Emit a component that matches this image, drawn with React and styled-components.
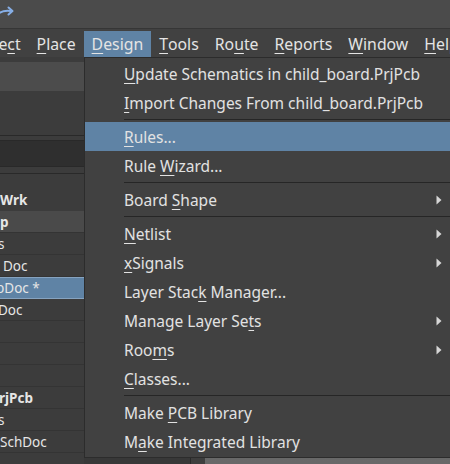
import React from "react";
import styled, { createGlobalStyle } from "styled-components";

const GlobalStyle = createGlobalStyle`
  html, body {
    margin: 0;
    padding: 0;
    background: #3c3c3c;
  }
  body {
    font-family: "Noto Sans", "Open Sans", sans-serif;
  }
`;

const menuBarItems = [
  { label: "Project", key: 5, shift: -39 },
  { label: "Place", key: 0 },
  { label: "Design", key: 0, active: true },
  { label: "Tools", key: 0 },
  { label: "Route", key: 2 },
  { label: "Reports", key: 0 },
  { label: "Window", key: 0 },
  { label: "Help", key: 0 },
];

const menuItems = [
  { label: "Update Schematics in child_board.PrjPcb", key: 0 },
  { label: "Import Changes From child_board.PrjPcb", key: 0 },
  { sep: true },
  { label: "Rules...", key: 0, hover: true },
  { label: "Rule Wizard...", key: 5 },
  { sep: true },
  { label: "Board Shape", key: 6, sub: true },
  { sep: true },
  { label: "Netlist", key: 0, sub: true },
  { label: "xSignals", key: 0, sub: true },
  { label: "Layer Stack Manager...", key: 10 },
  { label: "Manage Layer Sets", key: 15, sub: true },
  { label: "Rooms", key: 3, sub: true },
  { label: "Classes...", key: 0 },
  { sep: true },
  { label: "Make PCB Library", key: 5 },
  { label: "Make Integrated Library", key: 1 },
];

const treeRows = [
  { text: "Wrk", bold: true, line: false },
  { text: "p", bold: true, state: "focus" },
  { text: "s", shift: -2 },
  { text: "Doc", shift: 3 },
  { text: "bDoc *", shift: -4, state: "selected" },
  { text: "Doc", shift: -2 },
  { text: "" },
  { text: "" },
  { text: "" },
  { text: "rjPcb", bold: true, shift: -1 },
  { text: "s", shift: -2 },
  { text: "SchDoc", shift: 0 },
  { text: "" },
];

const Hotkey = ({ label, index }) => (
  <>
    {label.slice(0, index)}
    <Key>{label[index]}</Key>
    {label.slice(index + 1)}
  </>
);

const RedoIcon = () => (
  <svg width="16" height="12" viewBox="0 0 16 12">
    <path
      d="M-4 11 C-1 5.5, 4 4, 11 5"
      fill="none"
      stroke="#86aee6"
      strokeWidth="2"
      strokeLinecap="round"
    />
    <path
      d="M8.5 1.5 L12.5 5 L8.5 8.5"
      fill="none"
      stroke="#86aee6"
      strokeWidth="2"
      strokeLinecap="round"
      strokeLinejoin="round"
    />
  </svg>
);

const SubArrow = () => (
  <svg width="6" height="10" viewBox="0 0 6 10">
    <path d="M0.5 0.5 L5.5 5 L0.5 9.5 Z" fill="#d6d6d6" />
  </svg>
);

const App = () => {
  return (
    <Screen>
      <GlobalStyle />
      <TopBar>
        <RedoIcon />
      </TopBar>
      <MenuBar>
        {menuBarItems.map((m) => (
          <MenuBarItem key={m.label} $active={m.active} $shift={m.shift}>
            <Hotkey label={m.label} index={m.key} />
          </MenuBarItem>
        ))}
      </MenuBar>
      <Body>
        <LeftPanel>
          <PanelGap $h={5} />
          <SearchBox />
          <PanelGap $h={44} />
          <Rule />
          <PanelGap $h={4} />
          <Rule />
          <DarkBand />
          <Rule />
          <PanelGap $h={6} />
          <Rule />
          <PanelGap $h={15} />
          {treeRows.map((r, i) => (
            <TreeRow key={i} $state={r.state} $line={r.line !== false}>
              <TreeText $bold={r.bold} $shift={r.shift || 0}>
                {r.text}
              </TreeText>
            </TreeRow>
          ))}
        </LeftPanel>
        <MiddlePanel />
        <Gutter />
        <Canvas />

        <Dropdown>
          {menuItems.map((item, i) =>
            item.sep ? (
              <Separator key={i} />
            ) : (
              <DropItem key={i} $hover={item.hover}>
                <span>
                  <Hotkey label={item.label} index={item.key} />
                </span>
                {item.sub && <SubArrow />}
              </DropItem>
            )
          )}
        </Dropdown>
      </Body>
    </Screen>
  );
};

const Screen = styled.div`
  width: 450px;
  height: 464px;
  overflow: hidden;
  background: #3c3c3c;
  display: flex;
  flex-direction: column;
  color: #e2e2e2;
`;

const TopBar = styled.div`
  height: 29px;
  flex-shrink: 0;
  box-sizing: border-box;
  background: #4b4b4b;
  border-bottom: 1px solid #363636;
  display: flex;
  align-items: flex-start;
  padding-top: 6px;
`;

const MenuBar = styled.div`
  height: 28px;
  flex-shrink: 0;
  background: #414141;
  display: flex;
  align-items: flex-end;
  white-space: nowrap;
  font-size: 15.8px;
`;

const MenuBarItem = styled.div`
  height: 26px;
  display: flex;
  align-items: center;
  padding: 0 8px;
  margin-left: ${(p) => (p.$shift ? `${p.$shift}px` : "0")};
  background: ${(p) => (p.$active ? "#5f83a5" : "transparent")};
  color: #e4e4e4;
`;

const Key = styled.span`
  text-decoration: underline;
  text-underline-offset: 3px;
  text-decoration-thickness: 1px;
`;

const Body = styled.div`
  position: relative;
  flex: 1;
  display: flex;
  min-height: 0;
`;

const LeftPanel = styled.div`
  width: 84px;
  flex-shrink: 0;
  background: #3c3c3c;
  display: flex;
  flex-direction: column;
  overflow: hidden;
  font-size: 13.5px;
`;

const PanelGap = styled.div`
  height: ${(p) => p.$h}px;
  flex-shrink: 0;
`;

const SearchBox = styled.div`
  height: 29px;
  flex-shrink: 0;
  background: #4c4c4c;
`;

const Rule = styled.div`
  height: 1px;
  flex-shrink: 0;
  background: #292929;
`;

const DarkBand = styled.div`
  height: 25px;
  flex-shrink: 0;
  background: #2f2f2f;
`;

const TreeRow = styled.div`
  height: 22px;
  flex-shrink: 0;
  box-sizing: border-box;
  display: flex;
  align-items: center;
  white-space: nowrap;
  border-bottom: 1px solid
    ${(p) => (p.$state === "selected" ? "#86a3c0" : p.$line ? "#343434" : "transparent")};
  border-top: 1px solid ${(p) => (p.$state === "selected" ? "#86a3c0" : "transparent")};
  background: ${(p) =>
    p.$state === "selected" ? "#5f83a5" : p.$state === "focus" ? "#4a4a4a" : "transparent"};
`;

const TreeText = styled.span`
  margin-left: ${(p) => p.$shift}px;
  font-weight: ${(p) => (p.$bold ? 700 : 400)};
  color: #e6e6e6;
`;

const MiddlePanel = styled.div`
  width: 106px;
  flex-shrink: 0;
  background: #383838;
  border-right: 1px solid #2a2a2a;
`;

const Gutter = styled.div`
  width: 14px;
  flex-shrink: 0;
  background: #3e3e3e;
`;

const Canvas = styled.div`
  flex: 1;
  background: linear-gradient(#707070, #686868);
`;

const Dropdown = styled.div`
  position: absolute;
  left: 84px;
  top: 0;
  width: 372px;
  box-sizing: border-box;
  background: #414141;
  border: 1px solid #2c2c2c;
  padding: 1px 0;
  font-size: 15.5px;
  white-space: nowrap;
`;

const DropItem = styled.div`
  height: 29px;
  display: flex;
  align-items: center;
  justify-content: space-between;
  padding: 0 13px 0 39px;
  background: ${(p) => (p.$hover ? "#5f83a5" : "transparent")};
  color: #e2e2e2;
`;

const Separator = styled.div`
  height: 5px;
  margin-left: 39px;
  display: flex;
  align-items: center;

  &::after {
    content: "";
    flex: 1;
    height: 1px;
    background: #262626;
  }
`;

export default App;
